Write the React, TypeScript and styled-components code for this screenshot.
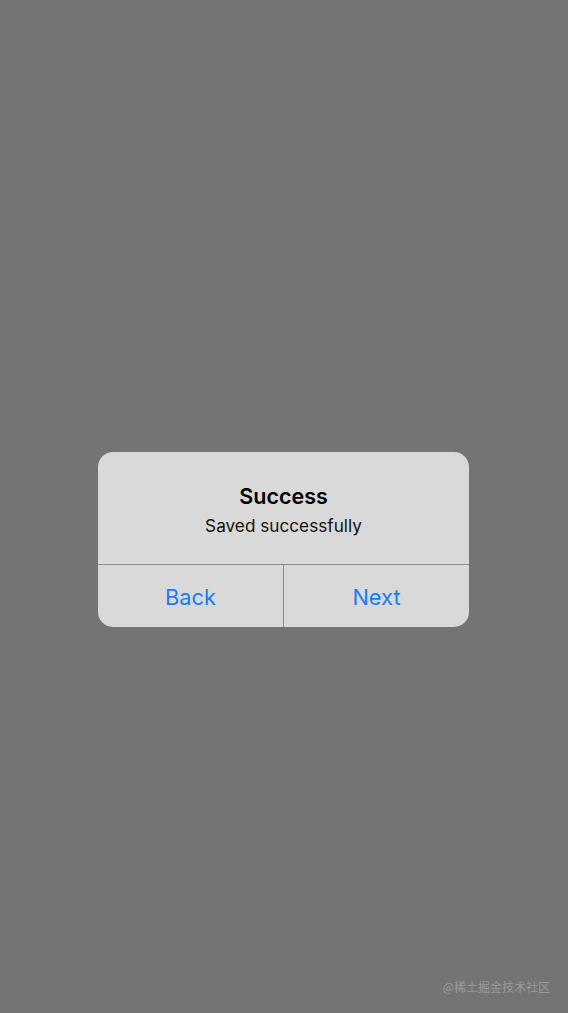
import React from 'react'
import styled, { createGlobalStyle } from 'styled-components'

const GlobalStyle = createGlobalStyle`
  html, body {
    margin: 0;
    padding: 0;
    height: 100%;
  }
  body {
    font-family: Inter, "Noto Sans", "Liberation Sans", sans-serif;
    background: #747474;
  }
  #root {
    height: 100%;
  }
`

const Screen = styled.div`
  position: relative;
  height: 1013px;
  display: flex;
  align-items: center;
  justify-content: center;
  background: #747474;
`

const Dialog = styled.div`
  width: 371px;
  margin-top: 66px;
  margin-right: 1px;
  background: #d9d9d9;
  border-radius: 15px;
  overflow: hidden;
`

const Body = styled.div`
  height: 113px;
  box-sizing: border-box;
  padding-top: 30px;
  display: flex;
  flex-direction: column;
  align-items: center;
  border-bottom: 1px solid #8c8c8c;
`

const Title = styled.div`
  font-size: 21.5px;
  font-weight: 600;
  color: #000;
  line-height: 28px;
`

const Message = styled.div`
  margin-top: 4px;
  font-size: 17.2px;
  color: #111;
  line-height: 24px;
`

const Actions = styled.div`
  display: grid;
  grid-template-columns: 185px 1fr;
  height: 62px;
`

const ActionButton = styled.button<{ $divider?: boolean }>`
  border: none;
  background: transparent;
  font-family: inherit;
  font-size: 21.8px;
  color: #1a7cf0;
  padding: 2px 0 0;
  cursor: pointer;
  border-left: ${p => (p.$divider ? '1px solid #8c8c8c' : 'none')};
`

const Watermark = styled.div`
  position: absolute;
  right: 18px;
  bottom: 18px;
  font-family: "Noto Sans CJK SC", sans-serif;
  font-size: 12px;
  color: rgba(190, 190, 190, 0.55);
`

export default function App() {
    return (
        <>
            <GlobalStyle />
            <Screen>
                <Dialog>
                    <Body>
                        <Title>Success</Title>
                        <Message>Saved successfully</Message>
                    </Body>
                    <Actions>
                        <ActionButton>Back</ActionButton>
                        <ActionButton $divider>Next</ActionButton>
                    </Actions>
                </Dialog>
                <Watermark>@稀土掘金技术社区</Watermark>
            </Screen>
        </>
    )
}
